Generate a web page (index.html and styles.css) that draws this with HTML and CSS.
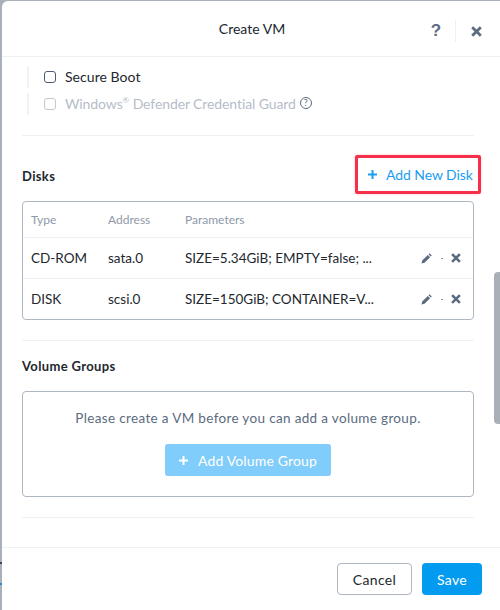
FILE: index.html
```html
<!DOCTYPE html>
<html lang="en">
<head>
    <meta charset="UTF-8">
    <meta name="viewport" content="width=device-width, initial-scale=1.0">
    <title>Create VM</title>
    <link rel="stylesheet" href="styles.css">
</head>
<body>

<div class="modal">
    <!-- Header -->
    <header class="modal-header">
        <h1>Create VM</h1>
        <div class="header-actions">
            <span class="help-mark">?</span>
            <span class="header-divider"></span>
            <svg class="icon-close" width="11" height="11" viewBox="0 0 11 11"><path d="M1.2 1.2l8.6 8.6M9.8 1.2l-8.6 8.6"/></svg>
        </div>
    </header>

    <div class="modal-body">
        <!-- Boot options -->
        <div class="option-row">
            <span class="checkbox"></span>
            <span class="option-text">Secure Boot</span>
        </div>
        <div class="option-row disabled">
            <span class="checkbox"></span>
            <span class="option-text">Windows<sup>®</sup> Defender Credential Guard</span>
            <span class="info-mark">?</span>
        </div>

        <hr class="rule rule-boot">

        <!-- Disks -->
        <div class="section-head disks-head">
            <h2>Disks</h2>
            <a class="add-link">
                <svg class="icon-plus" width="9" height="9" viewBox="0 0 9 9"><path d="M4.5 0v9M0 4.5h9"/></svg>
                Add New Disk
            </a>
        </div>
        <div class="disk-table">
            <div class="disk-row disk-row-head">
                <span>Type</span>
                <span>Address</span>
                <span>Parameters</span>
            </div>
            <div class="disk-row">
                <span>CD-ROM</span>
                <span>sata.0</span>
                <span class="params">SIZE=5.34GiB; EMPTY=false; ...</span>
                <span class="row-actions">
                    <svg width="11" height="11" viewBox="0 0 11 11"><path class="pencil" d="M0.5 10.5l0.7-3 5.6-5.6 2.3 2.3-5.6 5.6zM7.5 1.2l1-1 2.3 2.3-1 1z"/></svg>
                    <i class="dot"></i>
                    <svg class="icon-close" width="10" height="10" viewBox="0 0 11 11"><path d="M1.2 1.2l8.6 8.6M9.8 1.2l-8.6 8.6"/></svg>
                </span>
            </div>
            <div class="disk-row">
                <span>DISK</span>
                <span>scsi.0</span>
                <span class="params">SIZE=150GiB; CONTAINER=V...</span>
                <span class="row-actions">
                    <svg width="11" height="11" viewBox="0 0 11 11"><path class="pencil" d="M0.5 10.5l0.7-3 5.6-5.6 2.3 2.3-5.6 5.6zM7.5 1.2l1-1 2.3 2.3-1 1z"/></svg>
                    <i class="dot"></i>
                    <svg class="icon-close" width="10" height="10" viewBox="0 0 11 11"><path d="M1.2 1.2l8.6 8.6M9.8 1.2l-8.6 8.6"/></svg>
                </span>
            </div>
        </div>

        <hr class="rule rule-disks">

        <!-- Volume Groups -->
        <h2 class="volume-title">Volume Groups</h2>
        <div class="volume-box">
            <p>Please create a VM before you can add a volume group.</p>
            <button class="btn-volume" type="button">
                <svg class="icon-plus" width="9" height="9" viewBox="0 0 9 9"><path d="M4.5 0v9M0 4.5h9"/></svg>
                Add Volume Group
            </button>
        </div>

        <hr class="rule rule-volume">
    </div>

    <!-- Footer -->
    <footer class="modal-footer">
        <button class="btn btn-cancel" type="button">Cancel</button>
        <button class="btn btn-save" type="button">Save</button>
    </footer>

    <div class="scroll-thumb"></div>
</div>

</body>
</html>
```

FILE: styles.css
```css
* {
    box-sizing: border-box;
}
html, body {
    height: 100%;
}
body {
    margin: 0;
    padding: 1px 0 0 2px;
    overflow: hidden;
    background-color: #aab0b7;
    background-image: linear-gradient(#3f4650, #3f4650), linear-gradient(#1b8fd6, #1b8fd6);
    background-size: 2px 2px;
    background-position: 0 562px, 0 583px;
    background-repeat: no-repeat;
    font-family: "Lato", "Liberation Sans", sans-serif;
    font-size: 14px;
    color: #22272e;
}
.modal {
    position: relative;
    display: flex;
    flex-direction: column;
    height: 609px;
    background: #fff;
    border-radius: 6px 0 0 0;
}
.modal-header {
    position: relative;
    flex: none;
    display: flex;
    align-items: center;
    justify-content: center;
    height: 56px;
    border-bottom: 1px solid #eef0f3;
}
.modal-header h1 {
    margin: 0 0 0 2px;
    font-size: 14px;
    font-weight: 400;
}
.header-actions {
    position: absolute;
    right: 18px;
    top: 19px;
    display: flex;
    align-items: center;
}
.help-mark {
    width: 12px;
    font-family: "Liberation Sans", sans-serif;
    font-size: 17px;
    font-weight: 700;
    line-height: 20px;
    text-align: center;
    color: #5b6b80;
}
.header-divider {
    width: 1px;
    height: 22px;
    margin: 0 15px 0 13px;
    background: #eef0f3;
}
.icon-close path {
    fill: none;
    stroke: #5b6b80;
    stroke-width: 2.8;
}
.icon-plus {
    flex: none;
}
.icon-plus path {
    fill: none;
    stroke: currentColor;
    stroke-width: 2;
}
.modal-body {
    flex: 1;
    padding: 9px 26px 0 20px;
    overflow: hidden;
}
.option-row {
    display: flex;
    align-items: center;
    height: 22px;
    margin: 0 0 5px 5px;
    padding-left: 15px;
    border-left: 2px solid #f1f2f4;
    letter-spacing: 0.05px;
}
.option-text {
    margin-bottom: 2px;
}
.checkbox {
    flex: none;
    width: 12px;
    height: 12px;
    margin-right: 9px;
    border: 1px solid #4e5d72;
    border-radius: 3px;
}
.option-row.disabled {
    color: #b6bdc8;
    letter-spacing: -0.1px;
}
.option-row.disabled .checkbox {
    border-color: #c3c9d2;
}
.option-row sup {
    font-size: 8px;
    line-height: 0;
}
.info-mark {
    flex: none;
    width: 12px;
    height: 12px;
    margin: -3px 0 0 4px;
    border: 1px solid #5b6b80;
    border-radius: 50%;
    font-size: 9px;
    line-height: 10px;
    text-align: center;
    color: #5b6b80;
}
.rule {
    height: 1px;
    margin: 0;
    border: 0;
    background: #eef0f3;
}
.rule-boot {
    margin-top: 20px;
}
h2 {
    margin: 0;
    font-size: 13px;
    font-weight: 700;
    letter-spacing: 0.35px;
}
.section-head {
    display: flex;
    align-items: center;
    justify-content: space-between;
}
.disks-head {
    margin-top: 19px;
}
.disks-head h2 {
    margin-top: 3px;
}
.add-link {
    display: flex;
    align-items: center;
    gap: 9px;
    width: 126px;
    height: 39px;
    margin-right: -7px;
    padding-left: 10px;
    border: 3px solid #f6304a;
    border-radius: 2px;
    color: #1b9df0;
    font-size: 14px;
    letter-spacing: -0.08px;
    box-shadow: 0 0 3px rgba(246, 48, 74, 0.25);
}
.disk-table {
    height: 119px;
    margin-top: 7px;
    border: 1px solid #aeb6c2;
    border-radius: 4px;
}
.disk-row {
    display: grid;
    grid-template-columns: 77px 77px 1fr 40px;
    align-items: center;
    height: 41px;
    padding: 0 12px 0 8px;
    border-top: 1px solid #eef0f3;
    font-size: 13.5px;
    white-space: nowrap;
}
.disk-row-head {
    height: 35px;
    border-top: 0;
    font-size: 12px;
    color: #8e99aa;
}
.row-actions {
    display: flex;
    align-items: center;
    justify-content: space-between;
}
.pencil {
    fill: #5b6b80;
}
.dot {
    width: 2px;
    height: 1px;
    background: #8e99aa;
}
.rule-disks {
    margin-top: 20px;
}
.volume-title {
    margin-top: 17px;
}
.volume-box {
    display: flex;
    flex-direction: column;
    align-items: center;
    height: 106px;
    margin-top: 17px;
    border: 1px solid #aeb6c2;
    border-radius: 4px;
}
.volume-box p {
    margin: 18px 0 0;
    font-size: 13.5px;
    line-height: 17px;
    letter-spacing: 0.34px;
    color: #5b6b80;
}
.btn-volume {
    display: flex;
    align-items: center;
    justify-content: center;
    gap: 10px;
    width: 166px;
    height: 32px;
    margin-top: 17px;
    border: 0;
    border-radius: 3px;
    background: #80ccfb;
    color: #fff;
    font: inherit;
    letter-spacing: 0.15px;
}
.rule-volume {
    margin-top: 20px;
}
.modal-footer {
    flex: none;
    display: flex;
    justify-content: flex-end;
    gap: 10px;
    height: 63px;
    padding: 15px 18px 0 0;
    border-top: 1px solid #eef0f3;
}
.btn {
    height: 32px;
    border-radius: 4px;
    font: inherit;
    letter-spacing: 0.35px;
}
.btn-cancel {
    width: 75px;
    border: 1px solid #aeb6c2;
    background: #fff;
    color: #22272e;
}
.btn-save {
    width: 60px;
    border: 0;
    background: #039bf0;
    color: #fff;
}
.scroll-thumb {
    position: absolute;
    right: 0;
    top: 271px;
    width: 6px;
    height: 152px;
    border-radius: 4px 0 0 4px;
    background: #aab0b7;
}
```
